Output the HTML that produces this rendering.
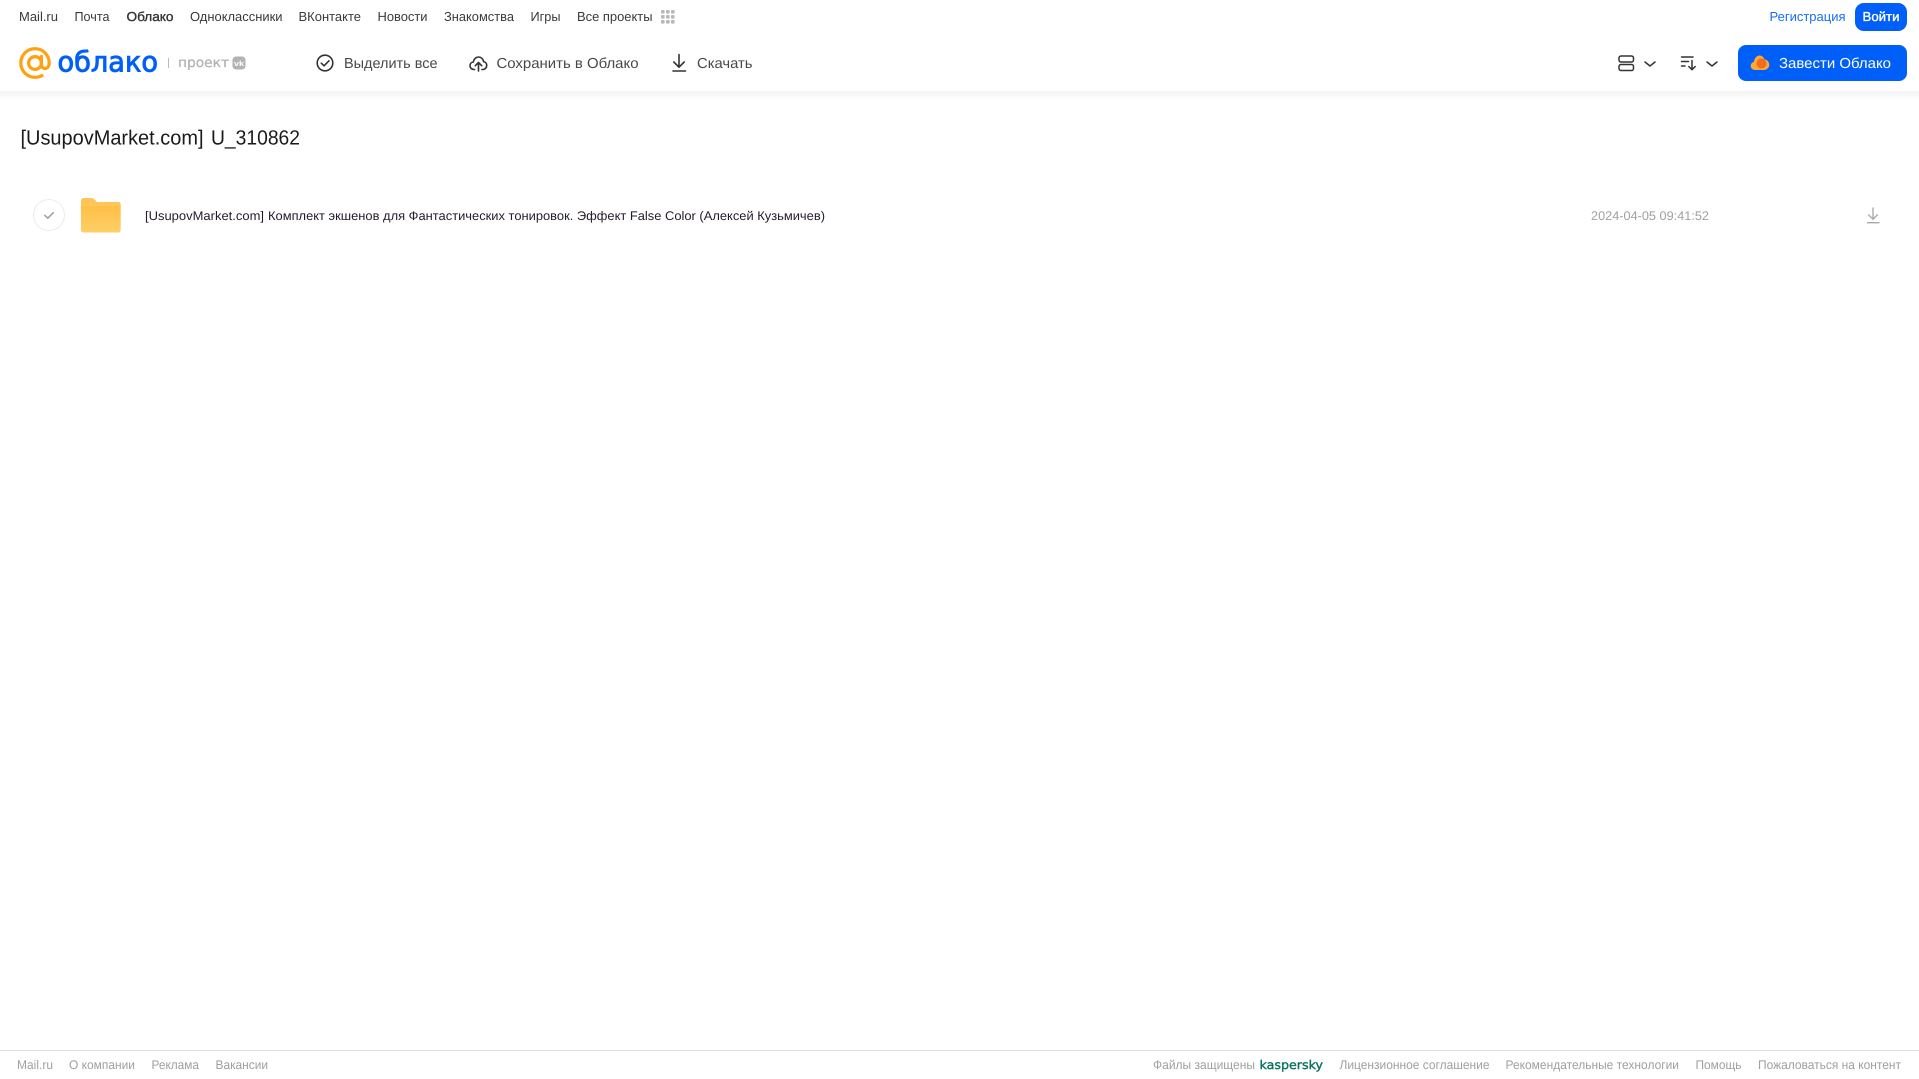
<!DOCTYPE html>
<html lang="ru">
<head>
<meta charset="utf-8">
<title>[UsupovMarket.com] U_310862</title>
<style>
html,body{margin:0;padding:0;background:#fff;width:1919px;height:1079px;overflow:hidden}
svg{position:absolute;left:0;top:0;display:block}
text{font-family:"Liberation Sans",Arial,sans-serif;text-rendering:geometricPrecision}
.n{font-size:13px;fill:#3a3a3a}
.t{font-size:14.5px;fill:#484848}
.f{font-size:12.5px;fill:#a0a0a0}
.d{font-family:"DejaVu Sans",sans-serif}
</style>
</head>
<body>
<svg width="1919" height="1079" viewBox="0 0 1919 1079" xmlns="http://www.w3.org/2000/svg">
<defs>
<linearGradient id="sh" x1="0" y1="0" x2="0" y2="1"><stop offset="0" stop-color="#f3f3f3"/><stop offset="1" stop-color="#fff"/></linearGradient>
<linearGradient id="fo" x1="0" y1="0" x2="0" y2="1"><stop offset="0" stop-color="#ffbf47"/><stop offset="1" stop-color="#ffcf66"/></linearGradient>
</defs>
<rect x="0" y="91" width="1919" height="9" fill="url(#sh)"/>

<!-- top nav -->
<text class="n" x="19" y="21" textLength="39" lengthAdjust="spacingAndGlyphs">Mail.ru</text>
<text class="n" x="74.5" y="21" textLength="35" lengthAdjust="spacingAndGlyphs">Почта</text>
<text class="n" x="126.5" y="21" textLength="47" lengthAdjust="spacingAndGlyphs" style="fill:#333" stroke="#333" stroke-width=".35">Облако</text>
<text class="n" x="190" y="21" textLength="92.5" lengthAdjust="spacingAndGlyphs">Одноклассники</text>
<text class="n" x="298.500" y="21" textLength="62.500" lengthAdjust="spacingAndGlyphs">ВКонтакте</text>
<text class="n" x="377.5" y="21" textLength="50" lengthAdjust="spacingAndGlyphs">Новости</text>
<text class="n" x="444" y="21" textLength="70" lengthAdjust="spacingAndGlyphs">Знакомства</text>
<text class="n" x="530.5" y="21" textLength="30" lengthAdjust="spacingAndGlyphs">Игры</text>
<text class="n" x="577" y="21" textLength="75.5" lengthAdjust="spacingAndGlyphs">Все проекты</text>
<g fill="#b8b8b8">
<rect x="661" y="10" width="3.6" height="3.6" rx="1"/><rect x="666" y="10" width="3.6" height="3.6" rx="1"/><rect x="671" y="10" width="3.6" height="3.6" rx="1"/>
<rect x="661" y="15" width="3.6" height="3.6" rx="1"/><rect x="666" y="15" width="3.6" height="3.6" rx="1"/><rect x="671" y="15" width="3.6" height="3.6" rx="1"/>
<rect x="661" y="20" width="3.6" height="3.6" rx="1"/><rect x="666" y="20" width="3.6" height="3.6" rx="1"/><rect x="671" y="20" width="3.6" height="3.6" rx="1"/>
</g>
<text class="n" x="1769.500" y="21" textLength="76" lengthAdjust="spacingAndGlyphs" style="fill:#1a6ff5">Регистрация</text>
<rect x="1855" y="3" width="52" height="28" rx="9" fill="#005ff9"/>
<text class="n" x="1862.5" y="21" textLength="37" lengthAdjust="spacingAndGlyphs" style="fill:#fff" stroke="#fff" stroke-width=".35">Войти</text>

<!-- logo -->
<g fill="none" stroke="#ffa00f" stroke-width="3.2" stroke-linecap="round">
<circle cx="35" cy="63" r="6.4"/>
<path d="M41.4 56.500V64.500c0 5.500 7.800 5.500 7.800-1.500 0-8-6.300-14.300-14.200-14.300S20.800 55 20.800 63s6.300 14.300 14.200 14.300c2.800 0 5-.6 7-1.700"/>
</g>
<text class="d" x="57.500" y="71.500" font-size="28" fill="#005ff9" stroke="#005ff9" stroke-width=".9" textLength="100.500" lengthAdjust="spacingAndGlyphs">облако</text>
<rect x="168" y="58" width="1" height="10" fill="#bbb"/>
<text class="d" x="178" y="67" font-size="13.500" fill="#b3b3b3" stroke="#b3b3b3" stroke-width=".3" textLength="51" lengthAdjust="spacingAndGlyphs">проект</text>
<rect x="232.500" y="56.500" width="13" height="13" rx="3.500" fill="#b3b3b3"/>
<text x="234" y="66" font-size="7.500" font-weight="700" fill="#fff" textLength="10" lengthAdjust="spacingAndGlyphs">vk</text>

<!-- toolbar -->
<g fill="none" stroke="#333" stroke-width="1.600" stroke-linecap="round" stroke-linejoin="round">
<circle cx="325" cy="63" r="7.800"/>
<path d="M321.300 63.200l2.700 2.600 5-5"/>
<path d="M474.500 69.500h-.5c-2.300 0-4-1.700-4-3.800 0-2 1.500-3.500 3.300-3.700.5-3 2.800-5 5.200-5 2.600 0 4.800 1.900 5.200 4.700 1.700.2 3 1.800 3 3.800 0 2.200-1.700 4-3.900 4h-.8"/>
<path d="M478.500 71V62.800M475.300 65.700l3.200-3.200 3.200 3.200"/>
<path d="M679 54.500V67M673.800 62l5.200 5.200 5.200-5.200M673 71h12.500"/>
</g>
<text class="t" x="344" y="68" textLength="93.500" lengthAdjust="spacingAndGlyphs">Выделить все</text>
<text class="t" x="496.500" y="68" textLength="142" lengthAdjust="spacingAndGlyphs">Сохранить в Облако</text>
<text class="t" x="697" y="68" textLength="55.500" lengthAdjust="spacingAndGlyphs">Скачать</text>

<!-- view / sort -->
<g fill="none" stroke="#333" stroke-width="1.500" stroke-linecap="round" stroke-linejoin="round">
<rect x="1619" y="56" width="14.500" height="6" rx="2"/>
<rect x="1619" y="64.500" width="14.500" height="6" rx="2"/>
<path d="M1645 62l5 4 5-4"/>
<path d="M1681.500 57h11.500M1681.500 61.500h7M1681.500 66h3.500M1692 60.500V69.500M1688.800 66.500l3.200 3.200 3.200-3.200"/>
<path d="M1707 62l5 4 5-4"/>
</g>

<!-- CTA -->
<rect x="1738" y="45" width="169" height="36" rx="8" fill="#005ff9"/>
<path d="M1755 70c-2.500 0-4.300-1.900-4.300-4.100 0-2 1.400-3.600 3.200-4 .5-3.600 2.600-6.400 5.600-6.400 2.400 0 4.100 1.500 4.800 3.700 2.800.3 5 2.800 5 5.600 0 2.800-2.300 5.200-5.400 5.200z" fill="#ffa930"/>
<circle cx="1761.500" cy="63.500" r="5" fill="#f26c22"/>
<text class="t" x="1779" y="68" textLength="112" lengthAdjust="spacingAndGlyphs" style="fill:#fff">Завести Облако</text>

<!-- title -->
<text x="20.500" y="144.500" font-size="20.500" fill="#1a1a1a" textLength="183" lengthAdjust="spacingAndGlyphs">[UsupovMarket.com]</text>
<text x="211" y="144.500" font-size="20.500" fill="#1a1a1a" textLength="89" lengthAdjust="spacingAndGlyphs">U_310862</text>

<!-- row -->
<circle cx="49" cy="215" r="15.500" fill="#fff" stroke="#ececec" stroke-width="1"/>
<path d="M44.800 215.300l3 2.900 5.500-5.500" fill="none" stroke="#a0a0a0" stroke-width="1.500" stroke-linecap="round" stroke-linejoin="round"/>
<path d="M81 200.500c0-1.400 1.100-2.500 2.500-2.500h7.800c1.200 0 2.200.5 3 1.300l2.700 2.700h21.200c1.400 0 2.500 1.100 2.500 2.500V206H81z" fill="#ffc557"/>
<path d="M81 206h39.700v24c0 1.400-1.100 2.500-2.500 2.500H83.500c-1.400 0-2.500-1.100-2.500-2.500z" fill="url(#fo)"/>
<text x="145" y="220" font-size="12.500" fill="#241a2a" textLength="119" lengthAdjust="spacingAndGlyphs">[UsupovMarket.com]</text>
<text x="268" y="220" font-size="12.500" fill="#241a2a" textLength="557" lengthAdjust="spacingAndGlyphs">Комплект экшенов для Фантастических тонировок. Эффект False Color (Алексей Кузьмичев)</text>
<text x="1591" y="220" font-size="12.500" fill="#a0a0a0" textLength="118" lengthAdjust="spacingAndGlyphs">2024-04-05 09:41:52</text>
<path d="M1873 207.500V219M1868.300 214.500l4.700 4.700 4.700-4.700" fill="none" stroke="#aaa" stroke-width="1.400"/>
<rect x="1867" y="222" width="12.500" height="1.400" fill="#aaa"/>

<!-- footer -->
<rect x="0" y="1050" width="1919" height="1" fill="#ddd"/>
<text class="f" x="17" y="1069" textLength="36" lengthAdjust="spacingAndGlyphs">Mail.ru</text>
<text class="f" x="69" y="1069" textLength="66" lengthAdjust="spacingAndGlyphs">О компании</text>
<text class="f" x="151.500" y="1069" textLength="47.500" lengthAdjust="spacingAndGlyphs">Реклама</text>
<text class="f" x="215.500" y="1069" textLength="52.500" lengthAdjust="spacingAndGlyphs">Вакансии</text>
<text class="f" x="1153" y="1069" textLength="102" lengthAdjust="spacingAndGlyphs">Файлы защищены</text>
<text class="d" x="1259.500" y="1069" font-size="12" fill="#0a7261" stroke="#0a7261" stroke-width=".4" textLength="63.500" lengthAdjust="spacingAndGlyphs">kaspersky</text>
<text class="f" x="1339.500" y="1069" textLength="150" lengthAdjust="spacingAndGlyphs">Лицензионное соглашение</text>
<text class="f" x="1505.500" y="1069" textLength="173.500" lengthAdjust="spacingAndGlyphs">Рекомендательные технологии</text>
<text class="f" x="1695.500" y="1069" textLength="46" lengthAdjust="spacingAndGlyphs">Помощь</text>
<text class="f" x="1758" y="1069" textLength="143" lengthAdjust="spacingAndGlyphs">Пожаловаться на контент</text>
</svg>
</body>
</html>
